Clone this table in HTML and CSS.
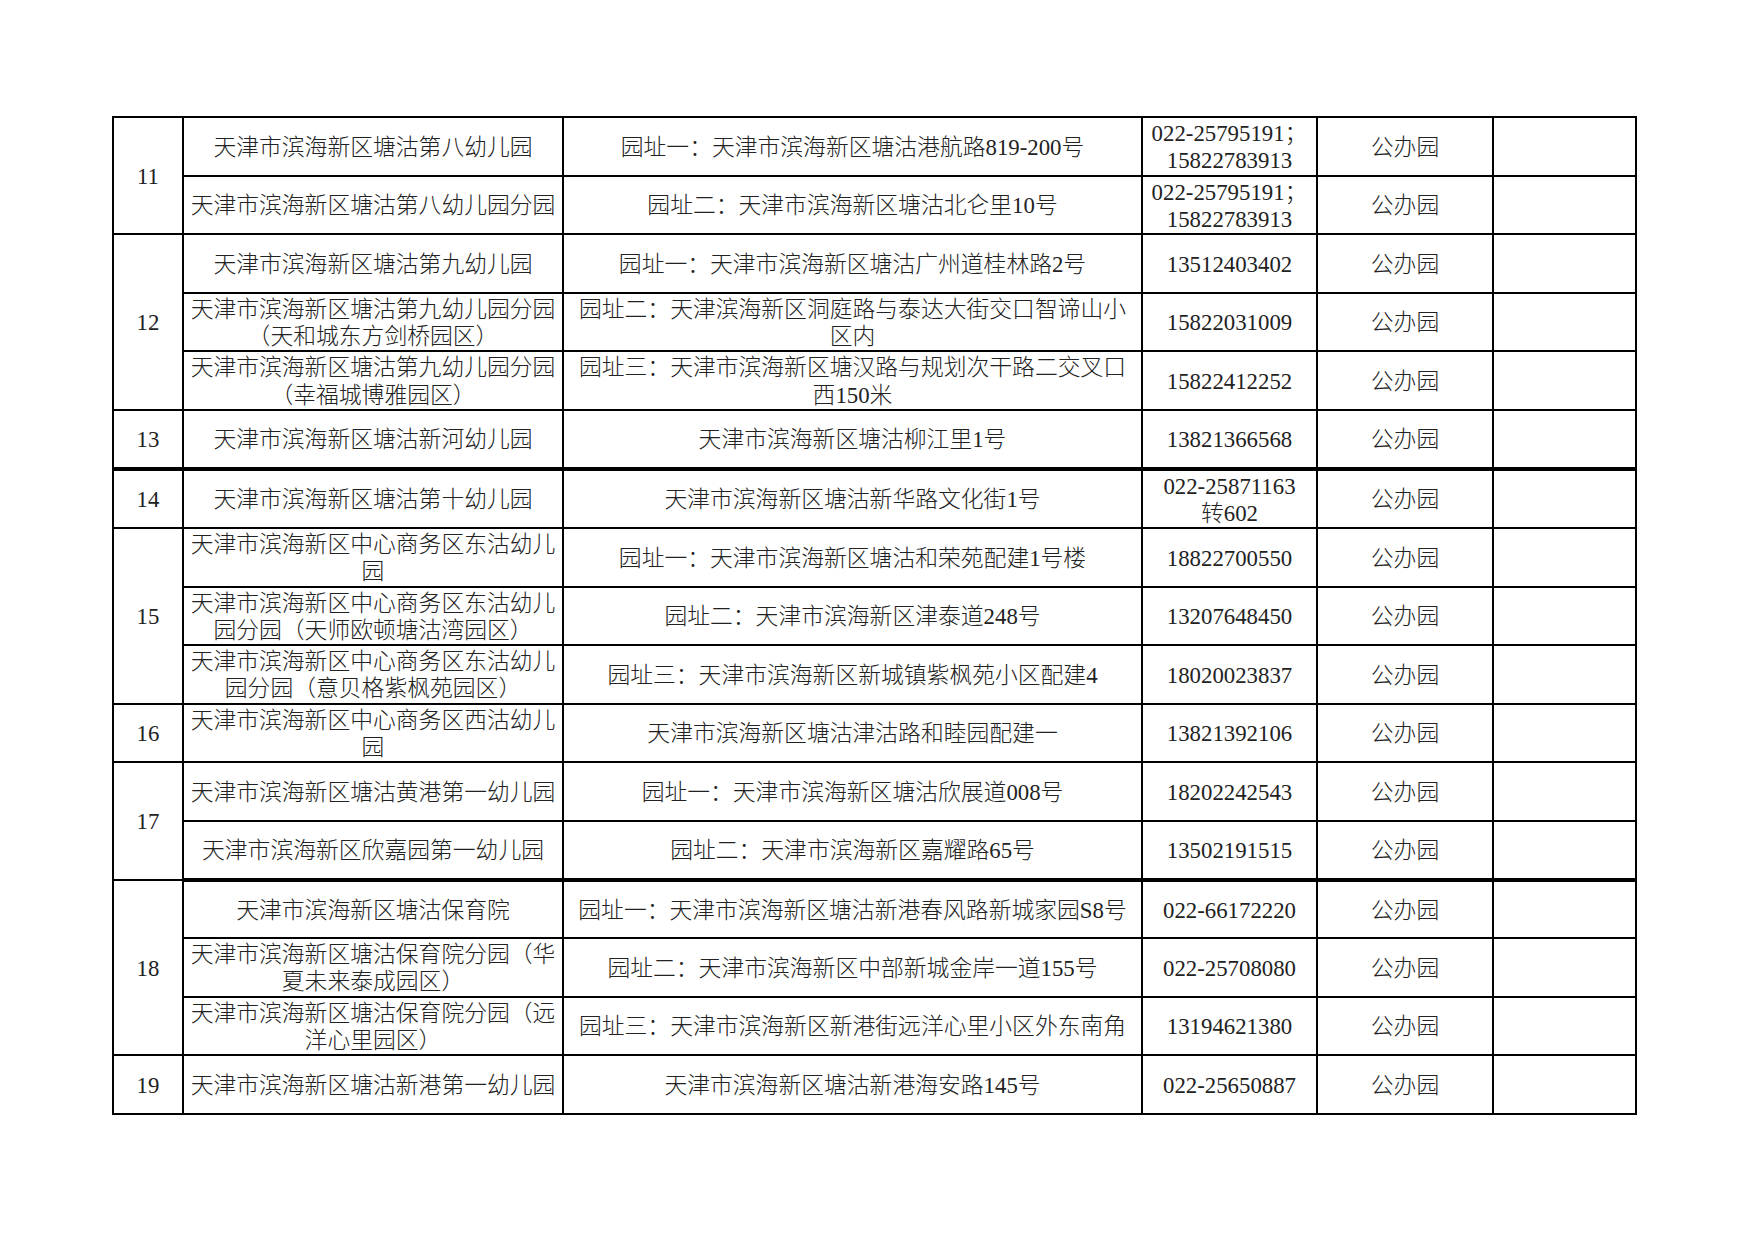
FILE: index.html
```html
<!DOCTYPE html>
<html lang="zh-CN">
<head>
<meta charset="utf-8">
<title>天津市滨海新区塘沽幼儿园名单</title>
<link rel="stylesheet" href="styles.css">
</head>
<body>
<table class="sheet">
  <colgroup>
    <col class="c-no">
    <col class="c-name">
    <col class="c-addr">
    <col class="c-tel">
    <col class="c-type">
    <col class="c-note">
  </colgroup>
  <tbody>
    <tr>
      <td rowspan="2">11</td>
      <td>天津市滨海新区塘沽第八幼儿园</td>
      <td>园址一：天津市滨海新区塘沽港航路819-200号</td>
      <td>022-25795191；<br>15822783913</td>
      <td>公办园</td>
      <td></td>
    </tr>
    <tr>
      <td>天津市滨海新区塘沽第八幼儿园分园</td>
      <td>园址二：天津市滨海新区塘沽北仑里10号</td>
      <td>022-25795191；<br>15822783913</td>
      <td>公办园</td>
      <td></td>
    </tr>
    <tr>
      <td rowspan="3">12</td>
      <td>天津市滨海新区塘沽第九幼儿园</td>
      <td>园址一：天津市滨海新区塘沽广州道桂林路2号</td>
      <td>13512403402</td>
      <td>公办园</td>
      <td></td>
    </tr>
    <tr>
      <td>天津市滨海新区塘沽第九幼儿园分园<br>（天和城东方剑桥园区）</td>
      <td>园址二：天津滨海新区洞庭路与泰达大街交口智谛山小<br>区内</td>
      <td>15822031009</td>
      <td>公办园</td>
      <td></td>
    </tr>
    <tr>
      <td>天津市滨海新区塘沽第九幼儿园分园<br>（幸福城博雅园区）</td>
      <td>园址三：天津市滨海新区塘汉路与规划次干路二交叉口<br>西150米</td>
      <td>15822412252</td>
      <td>公办园</td>
      <td></td>
    </tr>
    <tr class="thick-bottom">
      <td>13</td>
      <td>天津市滨海新区塘沽新河幼儿园</td>
      <td>天津市滨海新区塘沽柳江里1号</td>
      <td>13821366568</td>
      <td>公办园</td>
      <td></td>
    </tr>
    <tr>
      <td>14</td>
      <td>天津市滨海新区塘沽第十幼儿园</td>
      <td>天津市滨海新区塘沽新华路文化街1号</td>
      <td>022-25871163<br>转602</td>
      <td>公办园</td>
      <td></td>
    </tr>
    <tr>
      <td rowspan="3">15</td>
      <td>天津市滨海新区中心商务区东沽幼儿<br>园</td>
      <td>园址一：天津市滨海新区塘沽和荣苑配建1号楼</td>
      <td>18822700550</td>
      <td>公办园</td>
      <td></td>
    </tr>
    <tr>
      <td>天津市滨海新区中心商务区东沽幼儿<br>园分园（天师欧顿塘沽湾园区）</td>
      <td>园址二：天津市滨海新区津泰道248号</td>
      <td>13207648450</td>
      <td>公办园</td>
      <td></td>
    </tr>
    <tr>
      <td>天津市滨海新区中心商务区东沽幼儿<br>园分园（意贝格紫枫苑园区）</td>
      <td>园址三：天津市滨海新区新城镇紫枫苑小区配建4</td>
      <td>18020023837</td>
      <td>公办园</td>
      <td></td>
    </tr>
    <tr>
      <td>16</td>
      <td>天津市滨海新区中心商务区西沽幼儿<br>园</td>
      <td>天津市滨海新区塘沽津沽路和睦园配建一</td>
      <td>13821392106</td>
      <td>公办园</td>
      <td></td>
    </tr>
    <tr>
      <td rowspan="2">17</td>
      <td>天津市滨海新区塘沽黄港第一幼儿园</td>
      <td>园址一：天津市滨海新区塘沽欣展道008号</td>
      <td>18202242543</td>
      <td>公办园</td>
      <td></td>
    </tr>
    <tr class="thick-bottom">
      <td>天津市滨海新区欣嘉园第一幼儿园</td>
      <td>园址二：天津市滨海新区嘉耀路65号</td>
      <td>13502191515</td>
      <td>公办园</td>
      <td></td>
    </tr>
    <tr>
      <td rowspan="3">18</td>
      <td>天津市滨海新区塘沽保育院</td>
      <td>园址一：天津市滨海新区塘沽新港春风路新城家园S8号</td>
      <td>022-66172220</td>
      <td>公办园</td>
      <td></td>
    </tr>
    <tr>
      <td>天津市滨海新区塘沽保育院分园（华<br>夏未来泰成园区）</td>
      <td>园址二：天津市滨海新区中部新城金岸一道155号</td>
      <td>022-25708080</td>
      <td>公办园</td>
      <td></td>
    </tr>
    <tr>
      <td>天津市滨海新区塘沽保育院分园（远<br>洋心里园区）</td>
      <td>园址三：天津市滨海新区新港街远洋心里小区外东南角</td>
      <td>13194621380</td>
      <td>公办园</td>
      <td></td>
    </tr>
    <tr>
      <td>19</td>
      <td>天津市滨海新区塘沽新港第一幼儿园</td>
      <td>天津市滨海新区塘沽新港海安路145号</td>
      <td>022-25650887</td>
      <td>公办园</td>
      <td></td>
    </tr>
  </tbody>
</table>
</body>
</html>
```

FILE: styles.css
```css
html, body {
  margin: 0;
  padding: 0;
  background: #ffffff;
}

.sheet {
  border-collapse: collapse;
  table-layout: fixed;
  width: 1525px;
  margin: 116px 0 0 112px;
  font-family: "Liberation Serif", "Noto Sans CJK SC", serif;
  font-size: 22.8px;
  font-weight: 300;
  color: #222222;
}

.c-no { width: 70px; }
.c-name { width: 380px; }
.c-addr { width: 579px; }
.c-tel { width: 175px; }
.c-type { width: 176px; }
.c-note { width: 143px; }

.sheet tr {
  height: 58.6px;
}

.sheet td {
  border: 2px solid #000000;
  padding: 2px 2px 0;
  text-align: center;
  vertical-align: middle;
  line-height: 27.2px;
  white-space: nowrap;
  overflow: hidden;
}

.sheet tr.thick-bottom td {
  border-bottom-width: 4px;
}
```
